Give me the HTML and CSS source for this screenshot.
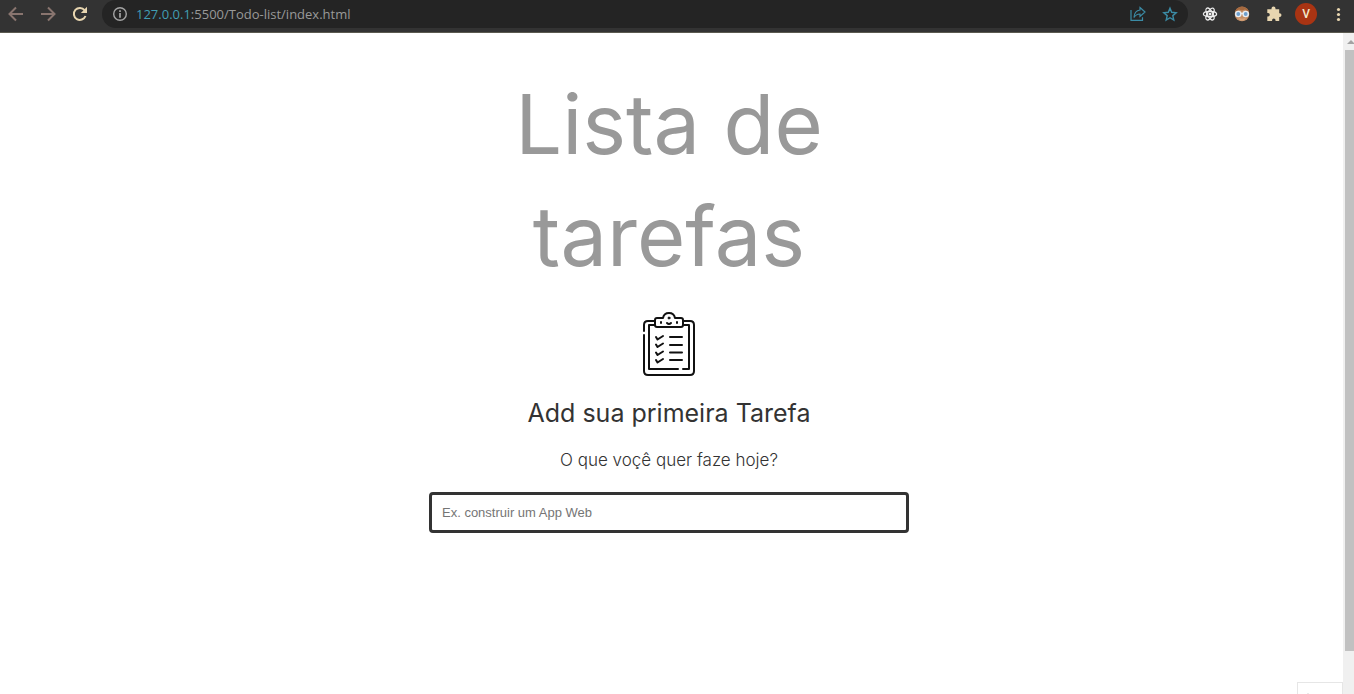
FILE: index.html
```html
<!DOCTYPE html>
<html lang="pt-BR">
<head>
<meta charset="utf-8">
<title>Lista de tarefas</title>
<link rel="stylesheet" href="styles.css">
</head>
<body>
<header class="toolbar">
  <button class="tool tool-muted" aria-label="Voltar"><svg width="16" height="16" viewBox="0 0 16 16"><path d="M15 8H2M8 1.5 1.5 8 8 14.500" fill="none" stroke="currentColor" stroke-width="2"/></svg></button>
  <button class="tool tool-muted" aria-label="Avançar"><svg width="16" height="16" viewBox="0 0 16 16"><path d="M1 8h13M8 1.500 14.500 8 8 14.500" fill="none" stroke="currentColor" stroke-width="2"/></svg></button>
  <button class="tool tool-cream" aria-label="Recarregar"><svg width="16" height="16" viewBox="0 0 16 16"><path d="M13.500 10A6 6 0 1 1 12.600 4.200" fill="none" stroke="currentColor" stroke-width="2"/><path d="M15 .8V7H8.800Z" fill="currentColor"/></svg></button>
  <div class="address">
    <button class="tool tool-info" aria-label="Informações do site"><svg width="16" height="16" viewBox="0 0 16 16"><circle cx="8" cy="8" r="6.300" fill="none" stroke="currentColor" stroke-width="1.400"/><path d="M8 7v4.700M8 4.200v1.700" stroke="currentColor" stroke-width="1.700"/></svg></button>
    <a class="url" href="#"><span class="host">127.0.0.1</span>:5500/Todo-list/index.html</a>
    <button class="tool tool-blue" aria-label="Compartilhar"><svg width="18" height="16" viewBox="0 0 18 16"><path d="M2 4v10.300h11.500v-3" fill="none" stroke="currentColor" stroke-width="1.200"/><path d="M11 1.500 16 6l-5 4.500V8C8 8 6.500 9 5 11.500 5.200 7.500 7.500 4.500 11 4Z" fill="none" stroke="currentColor" stroke-width="1.200"/></svg></button>
    <button class="tool tool-blue" aria-label="Favoritar"><svg width="16" height="16" viewBox="0 0 16 16"><path d="m8 2.200 1.700 4.100 4.500.4-3.400 2.900 1 4.400L8 11.700 4.200 14l1-4.400-3.400-2.900 4.500-.4Z" fill="none" stroke="currentColor" stroke-width="1.400"/></svg></button>
  </div>
  <button class="tool tool-white" aria-label="React"><svg width="16" height="16" viewBox="0 0 16 16"><g fill="none" stroke="currentColor" stroke-width="1.300"><ellipse cx="8" cy="8" rx="6.600" ry="2.700"/><ellipse cx="8" cy="8" rx="6.600" ry="2.700" transform="rotate(60 8 8)"/><ellipse cx="8" cy="8" rx="6.600" ry="2.700" transform="rotate(120 8 8)"/></g><circle cx="8" cy="8" r="1.500" fill="currentColor"/></svg></button>
  <button class="tool" aria-label="Extensão"><svg width="16" height="16" viewBox="0 0 16 16"><circle cx="8" cy="8" r="7.300" fill="#c48f66"/><path d="M1 6C2 2 6 .6 8 .6s6 1.400 7 5.400L11 3.500 8 4.500 5 3.500Z" fill="#a5693f"/><path d="M4 11.500c2 1.500 6 1.500 8 0l-2 3H6Z" fill="#d9a57d"/><circle cx="4.300" cy="8" r="2.600" fill="#6d9fce" stroke="#e8edf2" stroke-width="1.400"/><circle cx="11.700" cy="8" r="2.600" fill="#6d9fce" stroke="#e8edf2" stroke-width="1.400"/><path d="M7 7.500h2" stroke="#e8edf2" stroke-width="1.300"/></svg></button>
  <button class="tool tool-cream" aria-label="Extensões"><svg width="16" height="16" viewBox="0 0 16 16"><path d="M1.300 3.200h4.200V2.500a2 2 0 0 1 4 0v.7h3.700v4h.4a1.900 1.900 0 0 1 0 3.800h-.4v3.900H9.500v-.8a1.700 1.700 0 0 0-3.400 0v.8H1.300v-4.500h.8a1.700 1.700 0 0 0 0-3.400h-.8Z" fill="currentColor"/></svg></button>
  <button class="tool" aria-label="Perfil"><span class="avatar">V</span></button>
  <button class="tool tool-cream" aria-label="Menu"><svg width="16" height="16" viewBox="0 0 16 16"><g fill="currentColor"><circle cx="8.500" cy="3.500" r="1.600"/><circle cx="8.500" cy="8.500" r="1.600"/><circle cx="8.500" cy="13.500" r="1.600"/></g></svg></button>
</header>
<div class="viewport">
  <main class="page">
    <h1 class="title">Lista de tarefas</h1>
    <svg class="clipboard" width="54" height="66" viewBox="0 0 54 66" fill="none" stroke="#111" stroke-width="2" stroke-linecap="round" stroke-linejoin="round" aria-hidden="true">
      <path d="M13 10H6Q2 10 2 14v6M2 24v36q0 4 4 4h42q4 0 4-4V14q0-4-4-4h-7"/>
      <path d="M13 14H7v44h29M41 58h6V14h-6"/>
      <path d="M15 7h6q1-5 6-5t6 5h6q2 0 2 2v5q0 2-2 2H15q-2 0-2-2V9q0-2 2-2Z"/>
      <path d="M19 11v1M35 11v1M25 12q2 2 4 0"/>
      <circle cx="27" cy="7" r="1" fill="#111" stroke-width="1"/>
      <path d="m14 26 1.500 2.500L21 25M14 33.500 15.500 36l5.500-3.500M14 41.500 15.500 44l5.500-3.500M14 49l1.500 2.500L21 48M28 26h12M28 34h12M28 41.500h12M28 49h12"/>
    </svg>
    <h2 class="subtitle">Add sua primeira Tarefa</h2>
    <label class="question" for="task">O que voçê quer faze hoje?</label>
    <input class="task" id="task" type="text" placeholder="Ex. construir um App Web">
    <div class="corner"><svg width="12" height="4" viewBox="0 0 12 4"><path d="M2 2.500Q6-.5 10 2.500" fill="none" stroke="#bbb"/></svg></div>
  </main>
  <div class="scrollbar"><svg width="7" height="4" viewBox="0 0 7 4"><path d="M4 0 8 4H0Z" fill="#a3a3a3"/></svg><div class="thumb"></div></div>
</div>
</body>
</html>
```

FILE: styles.css
```css
* { box-sizing: border-box; }
body {
  margin: 0;
  height: 100vh;
  display: flex;
  flex-direction: column;
  overflow: hidden;
  background: #fff;
  font-family: Inter, "Open Sans", sans-serif;
}
button { border: 0; padding: 0; background: none; color: inherit; }

.toolbar {
  flex: none;
  display: flex;
  padding-bottom: 4px;
  border-bottom: 1px solid #5b5a50;
  background: #333;
}
.tool {
  flex: none;
  width: 32px;
  height: 28px;
  display: flex;
  align-items: center;
  justify-content: center;
}
.tool-muted { color: #89756f; }
.tool-cream { color: #e8d6b0; }
.tool-info { color: #a4a4a4; }
.tool-blue { color: #3b8ba5; }
.tool-white { color: #eee; }
.address {
  flex: 1;
  display: flex;
  align-items: center;
  margin: 0 6px;
  padding: 0 2px;
  border-radius: 14px;
  background: #242424;
}
.url {
  flex: 1;
  color: #999;
  font: 13px/20px "Open Sans", sans-serif;
  text-decoration: none;
}
.host { color: #419eb3; }
.avatar {
  width: 22px;
  border-radius: 50%;
  background: #a93413;
  color: #f3e7cc;
  font: 500 12px/22px Roboto, sans-serif;
}

.viewport { flex: 1; display: flex; min-height: 0; }
.page {
  position: relative;
  flex: 1;
  display: flex;
  flex-direction: column;
  align-items: center;
  padding: 35px 5px 0 0;
}
.title {
  width: 480px;
  max-width: 100%;
  margin: 0;
  padding: 0 80px;
  color: #999;
  font-size: 83px;
  font-weight: 400;
  line-height: 112px;
  text-align: center;
}
.clipboard { margin-top: 19px; }
.subtitle {
  margin: 18px 0 0;
  color: #333;
  font-size: 25px;
  font-weight: 400;
  line-height: 36px;
}
.question {
  margin-top: 17px;
  color: #333;
  font-size: 17px;
  font-weight: 300;
  line-height: 24px;
}
.task {
  width: 480px;
  max-width: 100%;
  height: 41px;
  margin-top: 20px;
  padding: 0 10px;
  border: 3px solid #333;
  border-radius: 4px;
  outline: 0;
  background: #fff;
  font: 13px "Liberation Sans", sans-serif;
}
.task::placeholder { color: #757575; }
.corner {
  position: absolute;
  right: 0;
  bottom: 0;
  width: 46px;
  height: 12px;
  padding: 8px 0 0 4px;
  border: 1px solid #e6e6e6;
  border-bottom: 0;
  line-height: 0;
}
.scrollbar {
  flex: none;
  width: 11px;
  display: flex;
  flex-direction: column;
  align-items: flex-end;
  padding: 7px 0 43px 2px;
  background: #f0f0f0;
}
.thumb { flex: 1; width: 100%; margin-top: 6px; background: #c1c1c1; }
```
